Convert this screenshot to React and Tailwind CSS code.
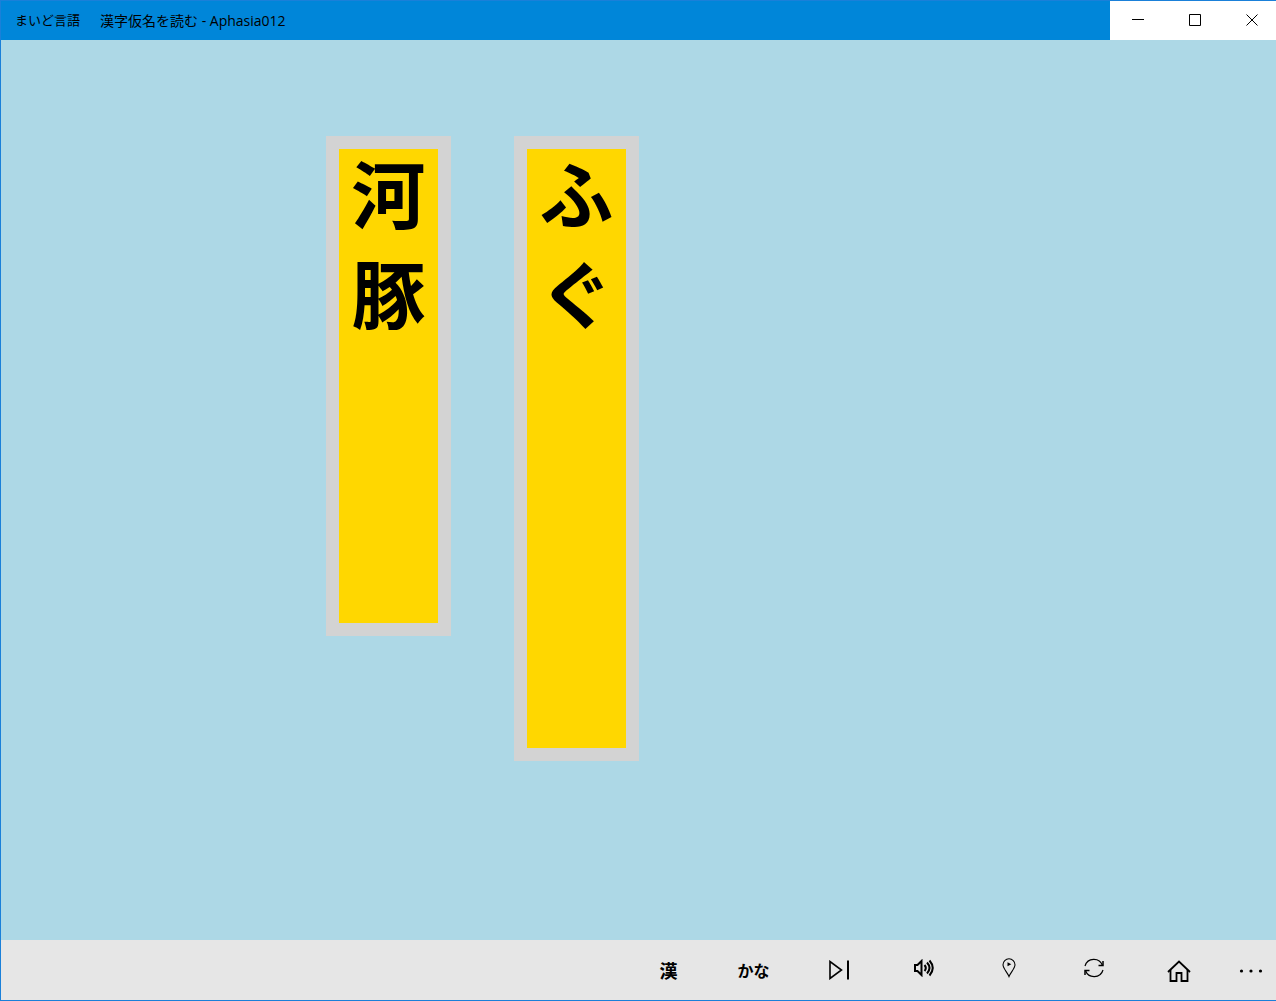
import React from 'react'

const windowButtons = [
  { label: 'Minimize', width: 'w-[57px]', path: 'M0 5.5h12' },
  { label: 'Maximize', width: 'w-[57px]', path: 'M0.5 0.5h11v11h-11z' },
  { label: 'Close', width: 'w-[52px]', path: 'M0.5 0.5l11 11M11.5 0.5l-11 11' },
]

const cards = [
  { text: '河豚', height: 'h-[500px]' },
  { text: 'ふぐ', height: 'h-[625px]' },
]

const TitleBar = () => (
  <header className="flex h-[39px] shrink-0 items-stretch justify-between bg-[#0086d9]">
    <h1 className="flex items-center gap-5 pl-[14px] text-black">
      <span className="text-[13px]">まいど言語</span>
      <span className="text-sm">漢字仮名を読む - Aphasia012</span>
    </h1>
    <div className="flex bg-white">
      {windowButtons.map(({ label, width, path }) => (
        <button key={label} aria-label={label} className={`${width} pb-[2px] pl-[22px]`}>
          <svg width="12" height="12" viewBox="0 0 12 12" fill="none" stroke="black">
            <path d={path} />
          </svg>
        </button>
      ))}
    </div>
  </header>
)

const WordCard = ({ text, height }) => (
  <div
    className={`${height} flex w-[125px] flex-col gap-2 border-[13px] border-[#d3d3d3] bg-[#ffd700] text-center text-[74px] leading-[92px] font-bold`}
  >
    {[...text].map((char) => (
      <div key={char}>{char}</div>
    ))}
  </div>
)

const NextIcon = () => (
  <svg width="22" height="20" viewBox="0 0 22 20" fill="none" stroke="black">
    <path d="M2 1.5v17L13.5 10z" strokeWidth="1.6" />
    <path d="M20 0.5v19" strokeWidth="2" />
  </svg>
)

const SpeakerIcon = () => (
  <svg width="22" height="18" viewBox="0 0 22 18" fill="none" stroke="black" strokeWidth="2">
    <path d="M2 6h2.5L8.5 2v14l-4-4H2z" />
    <path d="M11.5 6q2.6 3 0 6" />
    <path d="M14 3.5q5 5.5 0 11" />
    <path d="M16.5 1.5q6.5 7.5 0 15" />
  </svg>
)

const PinIcon = () => (
  <svg width="14" height="20" viewBox="0 0 14 20" fill="none" stroke="black" strokeWidth="1.1">
    <path d="M7 18.5C5.5 14.5 1 10.5 1 6.8a6 6 0 0 1 12 0C13 10.5 8.5 14.5 7 18.5z" />
    <path d="M5.5 4.2v4L9.3 6.2z" fill="black" stroke="none" />
  </svg>
)

const RefreshIcon = () => (
  <svg width="20" height="20" viewBox="0 0 20 20" fill="none" stroke="black" strokeWidth="1.2">
    <path d="M1 8A9.2 9.2 0 0 1 18.5 7.5" />
    <path d="M19 12A9.2 9.2 0 0 1 1.5 12.5" />
    <path d="M19 3v4.5h-4.5M1 17v-4.5h4.5" strokeWidth="1.5" />
  </svg>
)

const HomeIcon = () => (
  <svg width="24" height="22" viewBox="0 0 24 22" fill="none" stroke="black" strokeWidth="1.8">
    <path d="M1 12L12 1.5 23 12" />
    <path d="M3.5 10v11H9.5v-8h5v8h6V10" />
  </svg>
)

const MoreIcon = () => (
  <svg width="24" height="4" viewBox="0 0 24 4">
    <circle cx="2.5" cy="2" r="1.6" />
    <circle cx="12" cy="2" r="1.6" />
    <circle cx="21.5" cy="2" r="1.6" />
  </svg>
)

const commands = [
  { label: '漢字', content: '漢', style: 'pt-[2px] text-lg' },
  { label: 'かな', content: 'かな', style: 'pt-[2px] text-base' },
  { label: '次へ', content: <NextIcon /> },
  { label: '音声', content: <SpeakerIcon />, style: 'pb-1' },
  { label: '場所', content: <PinIcon />, style: 'pb-1' },
  { label: '更新', content: <RefreshIcon />, style: 'pb-1' },
  { label: 'ホーム', content: <HomeIcon />, style: 'pt-[2px]' },
]

const CommandBar = () => (
  <footer className="flex h-[60px] shrink-0 justify-end bg-[#e6e6e6]">
    {commands.map(({ label, content, style = '' }) => (
      <button
        key={label}
        aria-label={label}
        className={`${style} flex w-[85px] items-center justify-center font-bold`}
      >
        {content}
      </button>
    ))}
    <button aria-label="その他" className="flex w-[55px] items-center justify-center pt-[2px] pl-1">
      <MoreIcon />
    </button>
  </footer>
)

const App = () => {
  return (
    <div
      lang="ja"
      className="flex min-h-screen flex-col border-y border-l border-[#1a80d9] bg-[#add8e6] font-['Open_Sans','Noto_Sans_CJK_JP',sans-serif] text-black"
    >
      <TitleBar />
      <main className="flex grow items-start gap-[63px] pt-24 pb-8 pl-[325px]">
        {cards.map((card) => (
          <WordCard key={card.text} {...card} />
        ))}
      </main>
      <CommandBar />
    </div>
  )
}

export default App
